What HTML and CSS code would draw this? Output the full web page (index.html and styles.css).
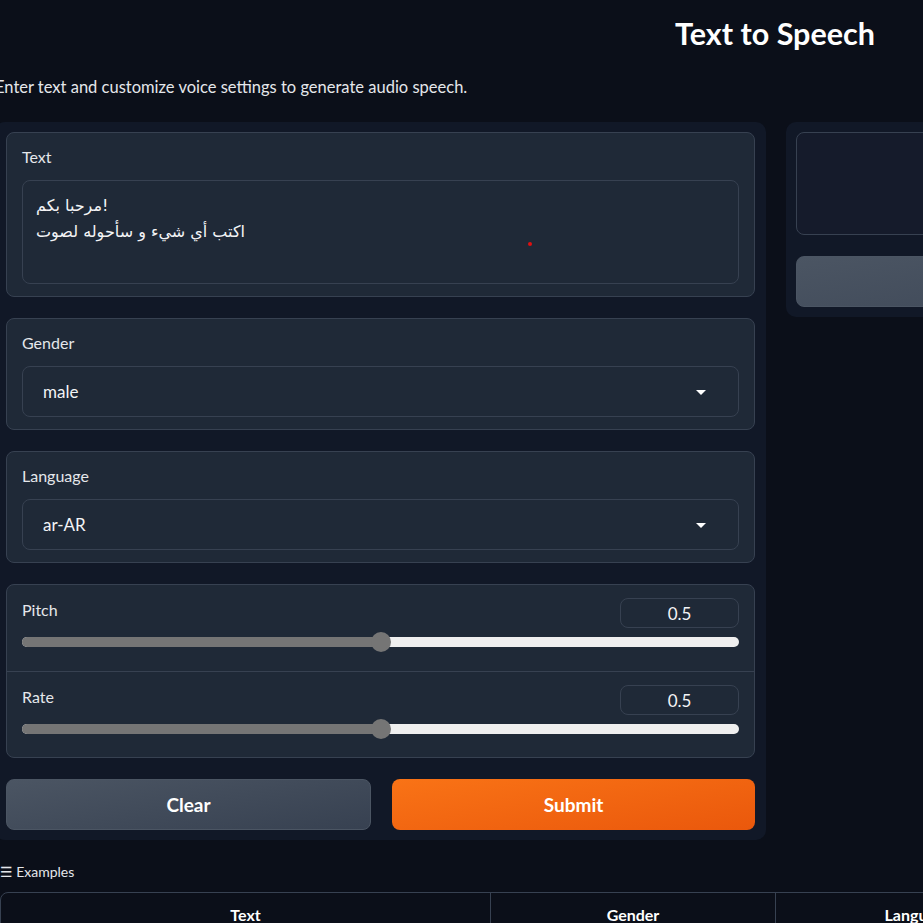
FILE: index.html
```html
<!DOCTYPE html>
<html>
<head>
<meta charset="utf-8">
<link rel="stylesheet" href="styles.css">
</head>
<body>
<div class="app">
  <h1 class="title">Text to Speech</h1>
  <p class="subtitle">Enter text and customize voice settings to generate audio speech.</p>
  <div class="row">
    <div class="panel left">
      <div class="block">
        <div class="label">Text</div>
        <div class="textarea">مرحبا بكم!
اكتب أي شيء و سأحوله لصوت<span class="dot"></span></div>
      </div>
      <div class="block">
        <div class="label">Gender</div>
        <div class="select"><span>male</span><span class="caret"></span></div>
      </div>
      <div class="block">
        <div class="label">Language</div>
        <div class="select"><span>ar-AR</span><span class="caret"></span></div>
      </div>
      <div class="block sliders">
        <div class="srow">
          <div class="shead"><span class="label">Pitch</span><span class="num">0.5</span></div>
          <div class="track"><div class="fill" style="width:50%"></div><div class="thumb" style="left:50%"></div></div>
        </div>
        <div class="srow">
          <div class="shead"><span class="label">Rate</span><span class="num">0.5</span></div>
          <div class="track"><div class="fill" style="width:50%"></div><div class="thumb" style="left:50%"></div></div>
        </div>
      </div>
      <div class="buttons">
        <div class="btn secondary">Clear</div>
        <div class="btn primary">Submit</div>
      </div>
    </div>
    <div class="panel right">
      <div class="outbox"></div>
      <div class="btn secondary blank"></div>
    </div>
  </div>
  <div class="examples-label">☰ Examples</div>
  <div class="table">
    <div class="th c1">Text</div>
    <div class="th c2">Gender</div>
    <div class="th c3">Language</div>
  </div>
</div>
</body>
</html>
```

FILE: styles.css
```css
* { box-sizing: border-box; }
html, body {
  margin: 0;
  padding: 0;
  background: #0b0f19;
  overflow: hidden;
  height: 923px;
}
body {
  font-family: Lato, "DejaVu Sans", sans-serif;
  color: #e5e7eb;
}
.app {
  width: 1560px;
  margin-left: -5px;
}
.title {
  margin: 14px 0 0;
  text-align: center;
  font-size: 30.5px;
  line-height: 38px;
  font-weight: 700;
  color: #ffffff;
}
.subtitle {
  margin: 24px 0 0;
  font-size: 16.5px;
  line-height: 22px;
  color: #e5e7eb;
}
.row {
  margin-top: 24px;
  display: flex;
  gap: 20px;
  align-items: flex-start;
}
.panel {
  background: #111827;
  border-radius: 10px;
  padding: 10px 11px;
  display: flex;
  flex-direction: column;
  gap: 21px;
}
.panel.left { width: 771px; }
.panel.right { flex: 1; padding: 10px; }
.block {
  background: #1f2937;
  border: 1px solid #374151;
  border-radius: 8px;
  padding: 13px 15px 12px;
}
.label {
  font-size: 16px;
  line-height: 22px;
  color: #e5e7eb;
  margin-bottom: 12px;
}
.textarea {
  position: relative;
  height: 104px;
  border: 1px solid #374151;
  border-radius: 8px;
  background: #1f2937;
  padding: 12px 13px;
  white-space: pre-line;
  font-family: "DejaVu Sans", sans-serif;
  font-size: 16px;
  line-height: 26px;
  color: #f3f4f6;
}
.dot {
  position: absolute;
  left: 505px;
  top: 61px;
  width: 4px;
  height: 4px;
  border-radius: 50%;
  background: #e01010;
}
.select {
  height: 51px;
  border: 1px solid #374151;
  border-radius: 8px;
  background: #1f2937;
  display: flex;
  align-items: center;
  justify-content: space-between;
  padding: 0 32px 0 20px;
  font-size: 17px;
  color: #f3f4f6;
}
.caret {
  width: 0;
  height: 0;
  border-left: 5px solid transparent;
  border-right: 5px solid transparent;
  border-top: 5px solid #ffffff;
  margin-top: 2px;
}
.sliders { padding: 0; }
.srow {
  padding: 13px 15px 19px;
}
.srow + .srow { border-top: 1px solid #374151; padding-bottom: 18px; }
.shead {
  display: flex;
  justify-content: space-between;
  align-items: flex-start;
  height: 30px;
}
.shead .label { margin: 1px 0 0; line-height: 22px; }
.num {
  width: 119px;
  height: 30px;
  border: 1px solid #374151;
  border-radius: 8px;
  display: flex;
  align-items: center;
  justify-content: center;
  font-size: 17px;
  color: #f3f4f6;
}
.track {
  position: relative;
  margin-top: 9px;
  height: 10px;
  border-radius: 5px;
  background: #efefef;
  margin-bottom: 5px;
}
.fill {
  position: absolute;
  left: 0; top: 0; bottom: 0;
  background: #757575;
  border-radius: 5px 0 0 5px;
}
.thumb {
  position: absolute;
  top: -5px;
  width: 20px;
  height: 20px;
  margin-left: -10px;
  border-radius: 50%;
  background: #757575;
}
.buttons {
  display: flex;
  gap: 21px;
}
.btn {
  flex: 1;
  height: 51px;
  border-radius: 8px;
  display: flex;
  align-items: center;
  justify-content: center;
  font-size: 19px;
  font-weight: 700;
  color: #ffffff;
}
.btn.secondary {
  background: linear-gradient(170deg, #4b5563, #374151);
  border: 1px solid #4b5563;
}
.btn.primary {
  background: linear-gradient(170deg, #f97316, #ea580c);
}
.btn.blank { flex: none; }
.outbox {
  height: 103px;
  border: 1px solid #374151;
  border-radius: 8px;
  background: #151b2b;
}
.examples-label {
  margin: 23px 0 0 5px;
  font-size: 14px;
  line-height: 18px;
  color: #e5e7eb;
}
.table {
  margin: 11px 0 0 5px;
  border: 1px solid #374151;
  border-radius: 8px;
  display: flex;
  height: 60px;
}
.th {
  text-align: center;
  font-size: 16px;
  font-weight: 700;
  color: #ffffff;
  padding-top: 12px;
}
.c1 { width: 490px; border-right: 1px solid #374151; }
.c2 { width: 285px; border-right: 1px solid #374151; }
.c3 { width: 285px; }
```
